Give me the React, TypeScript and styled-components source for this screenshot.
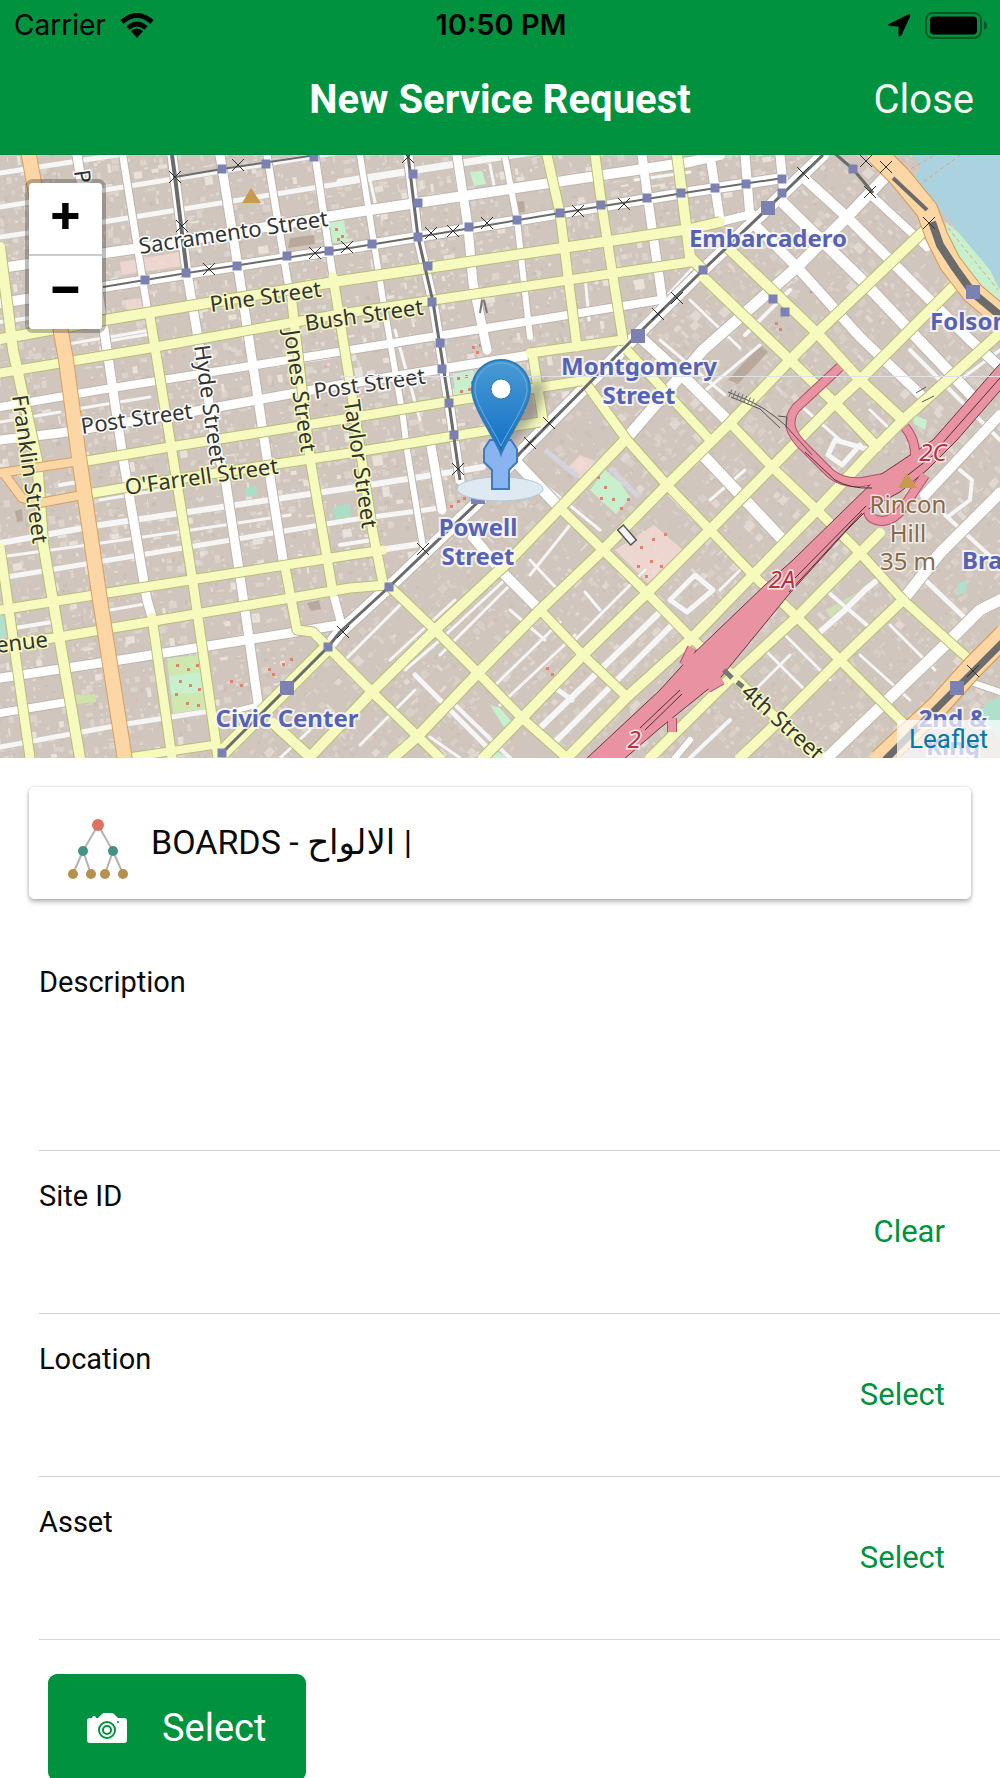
import React from "react";
import styled, { createGlobalStyle } from "styled-components";

const green = "#00923f";

const GlobalStyle = createGlobalStyle`
  *, *::before, *::after { box-sizing: border-box; }
  body { margin: 0; background: #fff; color: #0a0a0a; font-family: Roboto, "Noto Sans", "DejaVu Sans", sans-serif; }
  button, input, textarea { font: inherit; color: inherit; }
`;

/* ---------- map data ---------- */

type Road = [string, number];

const minorRoads: Road[] = [
  ["0,173 117,155", 5], ["0,207 340,152", 5], ["0,237 103,222 350,182 500,156", 5],
  ["340,182 545,150", 7], ["0,322 60,314", 4], ["108,341 150,334", 3], ["66,362 160,347", 3],
  ["62,345 145,331", 3], ["75,428 155,415", 3], ["70,410 150,397", 3], ["0,422 60,412", 3],
  ["0,557 80,546 185,531 290,515", 3], ["7,577 110,560 225,541 350,520 440,508", 5],
  ["0,543 100,525 350,488 483,467", 6], ["100,500 160,490", 3], ["60,485 78,482", 4],
  ["110,610 145,604", 3], ["15,628 52,622", 4], ["0,747 120,725 210,711", 5],
  ["160,382 235,371 330,357", 4], ["340,545 372,540", 4], ["380,550 433,542", 6],
  ["440,300 520,287", 3], ["395,330 420,420", 3], ["370,180 378,215", 3],
  ["490,165 496,195", 3], ["455,170 460,200", 3], ["585,275 589,320", 3],
  ["635,180 690,172", 3], ["660,170 700,164", 3], ["690,300 740,348", 3], ["660,340 725,395", 3],
  ["700,260 640,325", 3], ["745,335 790,290", 4], ["700,395 760,345", 3],
  ["405,670 440,640 510,575", 3], ["345,660 400,605", 3], ["390,660 455,600", 3],
  ["530,575 570,525", 3], ["530,560 560,592", 3], ["510,610 545,640", 3],
  ["440,655 515,580", 3], ["490,690 560,622", 3], ["500,705 575,635", 3],
  ["450,700 510,758", 4], ["415,675 490,750", 5], ["360,745 415,690", 3], ["430,737 460,758", 3],
  ["540,728 660,612", 6], ["555,742 672,625", 6], ["558,690 572,700", 5],
  ["575,640 645,570", 3], ["585,592 600,610", 3], ["720,590 745,565", 3],
  ["670,600 695,575 713,590 687,612 670,600", 5], ["820,632 845,610 865,590 875,582", 6],
  ["828,592 868,626", 4], ["785,635 830,680", 3], ["765,650 810,695", 3],
  ["745,700 790,655", 3], ["890,625 935,670", 3], ["860,655 910,700", 3],
  ["870,450 835,440 828,455 842,465 860,445", 5], ["945,515 1000,565", 4],
  ["960,470 972,480 970,500 950,515", 4], ["925,580 965,618", 5], ["670,495 710,535", 3],
  ["800,405 840,440", 3], ["870,410 893,432", 3], ["710,500 745,470", 3],
  ["640,740 690,700", 4], ["690,758 730,720", 4], ["520,465 600,530", 3],
  ["910,350 1000,440", 4], ["960,380 1000,350", 3], ["280,758 310,730", 3],
];

const whiteRoads: Road[] = [
  ["0,268 140,248 350,213 690,162 720,155", 10], ["0,303 103,287 350,248 690,192 783,178", 10],
  ["0,407 100,390 350,350 487,328 660,300", 8], ["0,440 60,433 190,412 340,385 530,355", 9],
  ["0,678 120,660 290,633 350,623", 9], ["0,713 67,702", 8], ["210,717 262,704", 5],
  ["77,155 103,323 123,458 147,600 152,617", 9],
  ["123,157 147,307", 7], ["172,155 187,273 200,350 217,450 225,477 245,610 260,717", 9],
  ["220,155 238,267 267,458 283,560", 9], ["267,155 287,277 292,303", 7],
  ["315,155 333,277", 7], ["333,593 343,630", 8], ["360,155 383,300 403,417 407,450 423,547", 6],
  ["408,155 418,237 433,302 449,403 460,480", 9], ["457,155 468,227 473,283 487,350", 9],
  ["430,440 442,510", 9], ["505,157 517,220 530,337", 6], ["642,155 648,200 662,297", 9],
  ["710,155 720,220", 9], ["745,155 750,217", 9], ["780,155 784,195", 9], ["720,222 752,214", 8],
  ["823,155 768,208 703,270 637,335 520,453 478,502 389,587 340,632 328,647", 12],
  ["890,172 847,217 797,267 703,350 625,440", 11],
  ["873,197 927,247", 8], ["803,177 847,217 893,263 970,340 1000,367", 10],
  ["780,200 860,278 973,397", 11], ["757,227 797,267 860,337 923,397", 10],
  ["640,337 690,383 730,423", 11], ["700,452 780,537", 11],
  ["517,463 560,508", 11], ["473,537 503,573 537,607", 10],
  ["1000,493 940,553 903,600", 11], ["1000,600 980,610 943,647 827,758", 11],
  ["925,495 1000,415", 10], ["675,758 690,740", 6], ["965,680 1000,692", 6],
];

const yellowRoads: Road[] = [
  ["0,339 105,320 340,281 690,229 720,222", 10], ["0,373 150,348 340,314 690,262 693,262", 9],
  ["87,461 170,447 350,418 440,403 587,380", 9], ["93,493 170,480 350,453 540,422", 9],
  ["0,610 107,593 350,555 383,550", 9], ["0,645 53,638 350,588 387,585", 9],
  ["132,757 213,745", 8], ["0,247 13,350 37,460 43,543 80,758", 10],
  ["0,547 10,617 30,758", 9], ["152,617 172,758", 9],
  ["150,317 173,458 193,583 218,758", 9], ["285,567 297,630 313,632 372,692 440,758", 9],
  ["292,303 310,458 333,593", 9], ["333,277 350,383 373,533 383,583", 9],
  ["547,155 560,213 577,347", 9], ["595,155 602,207 623,340", 9],
  ["677,155 682,193 690,257 703,270", 10], ["530,353 623,340", 9], ["533,357 543,420", 9],
  ["328,647 222,753", 14],
  ["625,440 560,508 507,563 435,630 372,692 310,757 273,723", 10],
  ["927,228 817,333 790,360 730,423 667,485 603,550 540,610 478,673 417,737 393,758", 10],
  ["957,283 860,380 835,403 772,467 710,530 647,593 583,655 522,718 483,758", 10],
  ["1000,333 903,420 873,450 817,510 753,575 690,640 627,697 567,758", 10],
  ["880,533 860,553 797,617 732,677 650,758", 10], ["903,600 840,660 777,723 740,758", 10],
  ["727,247 817,333 860,380 903,420", 10], ["703,277 790,360 835,403 877,447", 10],
  ["627,350 710,440", 9], ["730,423 772,467 817,510 860,553 903,600 973,663", 9],
  ["587,385 627,440 667,485 710,530 753,575 797,617 840,660 907,727", 9],
  ["560,508 603,550 647,593 690,637 727,670 817,758", 9],
  ["540,610 583,655 627,697", 9], ["390,587 435,630 478,673 522,718 567,758", 9],
];

const orangeRoads: Road[] = [
  ["28,150 66,360 78,450 100,600 125,760", 14],
  ["0,473 80,461", 8], ["5,475 22,498 40,503 82,495", 8],
];

const coastRoads: Road[] = [
  ["878,155 900,177 927,210 937,237 950,263 973,293 1005,320", 21],
  ["1005,635 973,667 937,707 880,760", 21],
];

const railLines: Road[] = [
  ["103,287 187,273 350,248 418,237 560,213 690,192 783,178", 2],
  ["172,155 175,177 187,273", 4], ["175,177 222,169 316,155", 2],
  ["408,155 418,237 433,302 449,403 460,480", 3],
  ["823,155 768,208 703,270 637,335 520,453 478,502 389,587 340,632 328,647 222,753", 3],
  ["833,152 853,169 873,193", 3], ["893,178 927,210", 4],
  ["932,222 940,245 955,268 973,293 1003,318", 8], ["1005,640 957,688 885,760", 7],
];

const motorway =
  "M1005,358 L933,440 L880,475 L793,560 L765,585 L690,657 L660,690 L585,760 L623,760 L660,728 L717,682 L790,593 L847,530 L867,510 L900,492 L927,470 L957,440 L1005,385 Z";
const ramps = [
  "M840,367 L796,408 Q789,416 791,428 Q794,438 807,450 L830,473 Q843,484 862,482 L895,476",
  "M868,509 Q868,520 882,521 Q896,520 905,505 L925,475",
  "M905,427 Q916,440 915,458",
  "M684,665 L692,648", "M708,688 L722,680", "M672,718 L672,732",
];

const stops: [number, number, number][] = [
  [222, 169, 9], [266, 164, 9], [314, 157, 9], [145, 280, 9], [186, 273, 9], [237, 266, 9], [287, 256, 9],
  [329, 251, 9], [413, 174, 9], [418, 203, 9], [372, 244, 9], [418, 237, 9], [469, 227, 9], [517, 220, 9],
  [560, 213, 9], [601, 205, 9], [647, 198, 9], [681, 193, 9], [428, 266, 9], [432, 302, 9], [440, 343, 9],
  [442, 369, 9], [449, 403, 9], [454, 435, 9], [715, 188, 9], [746, 184, 9], [782, 179, 9], [782, 193, 9],
  [853, 169, 9], [703, 270, 9], [773, 299, 9], [785, 312, 9], [768, 208, 14], [973, 292, 14],
  [638, 336, 14], [287, 688, 14], [328, 647, 9], [222, 753, 9], [389, 587, 9], [478, 497, 14], [957, 688, 14],
];

const crossings: [number, number][] = [
  [175, 177], [182, 226], [238, 165], [209, 269], [315, 253], [347, 247], [431, 233], [453, 231],
  [487, 223], [578, 211], [624, 204], [677, 298], [658, 314], [549, 423], [530, 443], [408, 157],
  [803, 173], [870, 192], [866, 161], [886, 167], [929, 223], [458, 469], [423, 549], [343, 632], [973, 671],
];

type StreetLabel = [text: string, x: number, y: number, angle: number, onYellow?: boolean];
const streetLabels: StreetLabel[] = [
  ["Sacramento Street", 140, 254, -8.5],
  ["Pine Street", 211, 312, -8, true],
  ["Bush Street", 306, 331, -8, true],
  ["Post Street", 315, 399, -8],
  ["Post Street", 82, 434, -8],
  ["O'Farrell Street", 126, 495, -8, true],
  ["Hyde Street", 194, 346, 82],
  ["Jones Street", 284, 331, 82, true],
  ["Taylor Street", 344, 401, 82, true],
  ["Franklin Street", 12, 396, 82, true],
  ["P", 74, 171, 82],
  ["enue", -3, 653, -7, true],
  ["4th Street", 740, 694, 42, true],
];

const placeLabels: [string, number, number, string?][] = [
  ["Embarcadero", 768, 247], ["Montgomery", 639, 375], ["Street", 639, 404],
  ["Powell", 478, 536], ["Street", 478, 565], ["Civic Center", 287, 727],
  ["Folsom", 930, 330, "start"], ["Brannan", 962, 569, "start"], ["2nd &", 953, 727], ["King", 953, 755],
];

/* Deterministic building footprints, laid along each street grid. */
function footprints(seed: number, w: number, h: number, chance: number, max: number) {
  let s = seed;
  const rnd = () => {
    s = (s * 1664525 + 1013904223) % 4294967296;
    return s / 4294967296;
  };
  let d = "";
  for (let y = 0; y < h; y += 9) {
    for (let x = 0; x < w; x += 10) {
      if (rnd() > chance) continue;
      const bw = Math.round(1 + rnd() * max);
      const bh = Math.round(1 + rnd() * max);
      d += `M${Math.round(x + rnd() * 8)},${Math.round(y + rnd() * 7)}h${bw}v${bh}h${-bw}z`;
    }
  }
  return d;
}
const lightLots = footprints(11, 1500, 1500, 0.4, 7);
const paleLots = footprints(29, 1500, 1500, 0.1, 9);
const thinLots = footprints(53, 1500, 1500, 0.4, 3);
const shadeLots = footprints(71, 1500, 1500, 0.25, 4);
const redDots = footprints(97, 1500, 1500, 0.012, 2);

const RoadSet = ({ roads, fill, casing, edge = 3 }: { roads: Road[]; fill: string; casing: string; edge?: number }) => (
  <g fill="none" strokeLinejoin="round">
    {roads.map(([p, w], i) => <polyline key={"c" + i} points={p} stroke={casing} strokeWidth={w + edge} />)}
    {roads.map(([p, w], i) => <polyline key={"f" + i} points={p} stroke={fill} strokeWidth={w} strokeLinecap="round" />)}
  </g>
);

const Lots = () => (
  <>
    <path d={shadeLots} fill="#cabfb6" />
    <path d={lightLots} fill="#dcd4cc" />
    <path d={paleLots} fill="#e9e2da" />
    <path d={thinLots} fill="#dfdad5" />
    <path d={redDots} fill="#f3a79d" />
  </>
);

const CityMap = () => (
  <MapDrawing viewBox="0 155 1000 603" preserveAspectRatio="xMidYMid slice" role="img" aria-label="Street map of San Francisco">
    <defs>
      <clipPath id="north"><path d="M0,155H823L222,758H0Z" /></clipPath>
      <clipPath id="south"><path d="M823,155H1000V758H222Z" /></clipPath>
      <linearGradient id="pin" x1="0" y1="0" x2="0" y2="1">
        <stop offset="0" stopColor="#4a9bd4" /><stop offset="1" stopColor="#126fc6" />
      </linearGradient>
      <filter id="soft"><feGaussianBlur stdDeviation="5" /></filter>
    </defs>
    <rect x="0" y="150" width="1000" height="620" fill="#d1c6bd" />
    <g clipPath="url(#north)"><g transform="rotate(-9) translate(-130 130)"><Lots /></g></g>
    <g clipPath="url(#south)"><g transform="rotate(-45) translate(-500 200)" opacity="0.7"><Lots /></g></g>

    <g fill="#f4d9d3" opacity="0.8">
      <path d="M120,262L180,252L183,266L122,275ZM125,300L145,298L148,310L127,312ZM654,525L683,550L648,583L615,550ZM580,455L598,462L582,480L565,470Z" />
    </g>
    <g fill="#c8f0cd">
      <path d="M167,658L200,655L207,710L173,714Z" fill="#cfe8b0" />
      <path d="M169,676L202,672L204,692L171,695Z" />
      <path d="M453,374L473,370L476,391L455,396ZM605,470L620,482L630,498L616,514L590,490ZM470,172L482,171L486,184L474,186ZM329,222L344,219L347,242L332,243Z" />
      <path d="M245,488L256,486L257,496L246,497ZM333,508L350,503L351,516L335,520Z" fill="#aadfc5" />
      <path d="M0,615L4,616L6,638L0,638ZM957,584L967,580L966,592L958,595ZM985,705L1000,695V740L975,715Z" fill="#aee0cb" />
      <path d="M490,705L500,708L512,722L504,727ZM497,752L510,758H490Z" />
      <path d="M913,415L927,420L925,430L914,424Z" />
      <path d="M75,695L95,694L96,702L77,704Z" fill="#cfe2a9" />
    </g>
    <g fill="#e8806f">
      {[[176, 664], [187, 668], [196, 664], [179, 680], [189, 684], [198, 688], [175, 693], [186, 702], [197, 704], [457, 377], [465, 375], [471, 381], [460, 390], [468, 388], [597, 476], [604, 486], [612, 498], [620, 507], [600, 497], [627, 498], [640, 546], [652, 538], [664, 533], [650, 560], [637, 565], [645, 575], [660, 565], [335, 228], [341, 235], [337, 238], [450, 505], [457, 500], [463, 497], [472, 346], [476, 351], [479, 344], [775, 322], [779, 328], [770, 337], [766, 342], [810, 290], [817, 296], [268, 668], [282, 663], [272, 673], [290, 658], [230, 680], [240, 684], [546, 667], [551, 673]].map(([x, y], i) => (
        <rect key={i} x={x} y={y} width="3" height="3" />
      ))}
    </g>
    <g fill="#b9a99d">
      <path d="M290,238L314,235L315,244L288,248ZM515,202L524,201L525,212L518,213ZM728,380L760,345L768,352L738,384ZM15,511L22,509L23,521L17,522ZM307,603L319,600L321,609L311,611Z" />
    </g>
    <path d="M826,610L862,590L866,594L834,625Z" fill="#cfe0b4" />

    <path d="M908,150H1000V300L985,265L943,213L913,182L920,165Z" fill="#aad3df" />
    <path d="M945,222L958,232L990,270L1000,290V312L975,288L952,255Z" fill="#c8f0cd" />
    <g fill="none" stroke="#e79b90" strokeWidth="1" strokeDasharray="4 3">
      <path d="M918,186L960,155M905,172L935,155M948,228L998,290" />
    </g>

    <RoadSet roads={minorRoads} fill="#f6f6f6" casing="#cdc5bf" edge={1} />
    <RoadSet roads={whiteRoads} fill="#fefefe" casing="#bdb5ae" edge={2} />
    <RoadSet roads={yellowRoads} fill="#f6fabf" casing="#b9bd79" edge={2} />
    <RoadSet roads={orangeRoads} fill="#fcd6a4" casing="#d5a161" edge={2} />
    <RoadSet roads={coastRoads} fill="#fcd6a4" casing="#d2994e" edge={2} />

    <g fill="none" strokeLinejoin="round">
      {ramps.map((d) => <path key={d} d={d} stroke="#b5506c" strokeWidth="10" />)}
      <path d={motorway} fill="#e892a2" stroke="#6b3442" strokeWidth="1" />
      {ramps.map((d) => <path key={d} d={d} stroke="#e892a2" strokeWidth="8" />)}
      <path d="M789,592L862,513M795,578L866,506M640,728L680,690M645,730L682,694M1000,378L940,446M904,478L940,450M805,452L835,480Q850,489 872,488" stroke="#4e3038" strokeWidth="1" />
      <path d="M728,392L745,399Q765,407 785,425L812,455M731,397L760,409L780,428M778,416L787,417L786,428M916,393L926,387M922,402L934,396" stroke="#555" strokeWidth="1" />
      <path d="M730,393L756,404" stroke="#777" strokeWidth="8" strokeDasharray="1 3" />
      <path d="M620,527L634,543" stroke="#555" strokeWidth="9" /><path d="M621,528L633,542" stroke="#f4f4f4" strokeWidth="6" />
      <path d="M610,468L637,496M545,450L578,477" stroke="#d3d2dd" strokeWidth="5" />
      {railLines.map(([p, w], i) => <polyline key={i} points={p} stroke="#6b6b6b" strokeWidth={w} />)}
      <path d="M482,300L480,313M484,300L487,313" stroke="#777" strokeWidth="2" />
    </g>
    <g stroke="#333" strokeWidth="1" fill="none">
      {crossings.map(([x, y], i) => <path key={i} d={`M${x - 6},${y - 6}l12,12m0,-12l-12,12`} />)}
    </g>
    <g fill="#7c81b4">
      {stops.map(([x, y, s], i) => <rect key={i} x={x - s / 2} y={y - s / 2} width={s} height={s} />)}
    </g>
    <path d="M251,188L261,203H242Z" fill="#c99a4d" />
    <path d="M907,473L917,488H898Z" fill="#c99a4d" />
    <path d="M724,670l8,8m5,4l6,5" stroke="#777" strokeWidth="5" />

    {streetLabels.map(([t, x, y, a, yellow], i) => (
      <StreetName key={i} $halo={yellow ? "#f6fabf" : "#ffffff"} transform={`translate(${x} ${y}) rotate(${a})`}>{t}</StreetName>
    ))}
    {placeLabels.map(([t, x, y, anchor], i) => (
      <PlaceName key={i} x={x} y={y} textAnchor={(anchor ?? "middle") as "start" | "middle"}>{t}</PlaceName>
    ))}
    <HillName x="908" y="513">Rincon</HillName>
    <HillName x="908" y="542">Hill</HillName>
    <HillName x="908" y="570">35 m</HillName>
    <ExitName x="933" y="461">2C</ExitName>
    <ExitName x="782" y="588">2A</ExitName>
    <ExitName x="634" y="748">2</ExitName>
    <path d="M340,376.5H1000" stroke="#dde3ea" strokeWidth="1" />

    <path d="M503,452L535,418Q552,385 540,378Q522,380 505,440Z" fill="#333" opacity="0.35" filter="url(#soft)" />
    <ellipse cx="500" cy="489" rx="43" ry="12" fill="#dfe9f1" stroke="#a9c8e0" />
    <path d="M490,440H511L517,449V462L509,470V489H492V470L484,462V449Z" fill="#8ab4ef" stroke="#3f7cbd" strokeWidth="2" />
    <path d="M501,454C497,441 472,408 472,389A29,29 0 0 1 530,389C530,408 505,441 501,454Z" fill="url(#pin)" stroke="#2f7ab5" strokeWidth="2" />
    <path d="M501,446C494,430 475,405 475,389A26,26 0 0 1 527,389C527,405 508,430 501,446Z" fill="none" stroke="#6db0dd" strokeWidth="1" />
    <circle cx="501" cy="389" r="10" fill="#fff" stroke="#2f79b6" />
  </MapDrawing>
);

/* ---------- styled parts ---------- */

const Screen = styled.main`
  display: flex;
  flex-direction: column;
  height: 100vh;
  overflow: hidden;
`;

const TopBar = styled.header`
  flex: none;
  background: ${green};
  border-bottom: 1px solid #0b7f3c;
`;

const Columns = styled.div`
  display: grid;
  grid-template-columns: 1fr auto 1fr;
  align-items: center;
`;

const StatusBar = styled(Columns)`
  height: 50px;
  padding: 0 12px 0 14px;
  color: #000;
  font-family: Inter, Roboto, sans-serif;
  font-size: 28px;
  line-height: 32px;
`;

const Cluster = styled.div<{ $end?: boolean }>`
  display: flex;
  align-items: center;
  gap: 14px;
  justify-content: ${(p) => (p.$end ? "flex-end" : "flex-start")};
`;

const Clock = styled.time`
  font-size: 29px;
  font-weight: 600;
`;

const NavBar = styled(Columns)`
  height: 104px;
  padding: 0 26px 4px;
  color: #fff;
`;

const Title = styled.h1`
  grid-column: 2;
  margin: 0;
  font-size: 40px;
  font-weight: 700;
  line-height: 48px;
`;

const CloseButton = styled.button`
  justify-self: end;
  padding: 0;
  border: 0;
  background: none;
  color: #f4f4f4;
  font-size: 40px;
  line-height: 48px;
`;

const Body = styled.div`
  flex: 1;
  min-height: 0;
  overflow: hidden;
`;

const MapPane = styled.section`
  position: relative;
  height: 603px;
  overflow: hidden;
  background: #d1c6bd;
`;

const MapDrawing = styled.svg`
  display: block;
  width: 100%;
  height: 100%;
`;

const StreetName = styled.text<{ $halo: string }>`
  font-family: "Noto Sans", sans-serif;
  font-size: 22px;
  fill: #333;
  stroke: ${(p) => p.$halo};
  stroke-width: 3px;
  paint-order: stroke;
`;

const PlaceName = styled.text`
  font-family: "Noto Sans", sans-serif;
  font-size: 24px;
  font-weight: 700;
  fill: #5562b6;
  stroke: rgba(255, 255, 255, 0.75);
  stroke-width: 4px;
  paint-order: stroke;
`;

const HillName = styled.text`
  font-family: "Noto Sans", sans-serif;
  font-size: 24px;
  fill: #8b6846;
  stroke: rgba(255, 255, 255, 0.7);
  stroke-width: 3px;
  paint-order: stroke;
  text-anchor: middle;
`;

const ExitName = styled(HillName)`
  font-style: italic;
  fill: #b9303f;
  stroke: #fbe9ea;
`;

const ZoomControl = styled.div`
  position: absolute;
  top: 24px;
  left: 25px;
  display: flex;
  flex-direction: column;
  border: 4px solid rgba(0, 0, 0, 0.25);
  border-radius: 8px;
  background-clip: padding-box;
`;

const ZoomButton = styled.button`
  width: 73px;
  height: 73px;
  padding: 0 0 12px;
  border: 0;
  background: #fff;
  color: #000;
  font-family: Inter, sans-serif;
  font-size: 52px;
  font-weight: 700;
  line-height: 60px;
  &:first-child { border-bottom: 2px solid #ccc; border-radius: 4px 4px 0 0; }
  &:last-child { border-radius: 0 0 4px 4px; }
`;

const Attribution = styled.div`
  position: absolute;
  right: 0;
  bottom: 0;
  padding: 0 12px;
  background: rgba(255, 255, 255, 0.7);
  font-size: 26px;
  line-height: 38px;
  a { color: #0078a8; text-decoration: none; }
`;

const Card = styled.section`
  display: flex;
  align-items: center;
  gap: 22px;
  height: 112px;
  margin: 29px 29px 38px;
  padding: 0 38px;
  border-radius: 5px;
  background: #fff;
  box-shadow: 0 3px 5px rgba(0, 0, 0, 0.28), 0 0 3px rgba(0, 0, 0, 0.16);
  font-size: 34px;
  line-height: 40px;
`;

const TreeIcon = styled.svg`
  flex: none;
  margin-top: 12px;
`;

const CardTitle = styled.span`
  padding-bottom: 2px;
`;

const Form = styled.form`
  padding-left: 39px;
`;

const Field = styled.div<{ $tall?: boolean }>`
  display: flex;
  align-items: center;
  height: ${(p) => (p.$tall ? 214 : 163)}px;
  padding-right: 55px;
  border-bottom: 1px solid #d4d4d4;
`;

const FieldMain = styled.div`
  display: flex;
  flex: 1;
  flex-direction: column;
  align-self: stretch;
  padding: 28px 0 12px;
  font-size: 29px;
  line-height: 34px;
`;

const fieldText = `
  flex: 1;
  min-height: 0;
  padding: 0;
  border: 0;
  outline: 0;
  background: transparent;
  resize: none;
`;
const TextInput = styled.input`${fieldText}`;
const TextArea = styled.textarea`${fieldText}`;

const FieldAction = styled.button`
  padding: 0;
  border: 0;
  background: none;
  color: ${green};
  font-size: 31px;
  line-height: 36px;
`;

const PhotoButton = styled.button`
  display: flex;
  align-items: center;
  gap: 35px;
  height: 107px;
  margin: 34px 0 0 9px;
  padding: 0 40px 0 39px;
  border: 0;
  border-radius: 9px;
  background: ${green};
  color: #fff;
  font-size: 38px;
  line-height: 44px;
`;

const Row = ({ id, label, action }: { id: string; label: string; action: string }) => (
  <Field>
    <FieldMain>
      <label htmlFor={id}>{label}</label>
      <TextInput id={id} type="text" />
    </FieldMain>
    <FieldAction type="button">{action}</FieldAction>
  </Field>
);

export default function App() {
  return (
    <Screen>
      <GlobalStyle />
      <TopBar>
        <StatusBar>
          <Cluster>
            <span>Carrier</span>
            <svg width="34" height="25" viewBox="0 0 34 25" fill="none" stroke="#000" strokeWidth="5">
              <path d="M2 9Q17 -4 32 9" />
              <path d="M8 15Q17 7 26 15" />
              <path d="M17 25L11 18Q17 13 23 18Z" fill="#000" stroke="none" />
            </svg>
          </Cluster>
          <Clock>10:50 PM</Clock>
          <Cluster $end>
            <svg width="23" height="23" viewBox="0 0 23 23">
              <path d="M1 10L20 0.5Q23 -0.5 22 3L13.5 21Q11 24 10.500 21L10.500 12.500L2 12Q-1 11.500 1 10Z" />
            </svg>
            <svg width="63" height="27" viewBox="0 0 63 27">
              <rect x="1" y="1" width="55" height="25" rx="7" fill="none" stroke="#045925" strokeWidth="2" />
              <rect x="5" y="4.500" width="47" height="18" rx="4" />
              <path d="M59 9Q62 10 62 13.500Q62 17 59 18Z" fill="#045925" />
            </svg>
          </Cluster>
        </StatusBar>
        <NavBar>
          <Title>New Service Request</Title>
          <CloseButton type="button">Close</CloseButton>
        </NavBar>
      </TopBar>
      <Body>
        <MapPane>
          <CityMap />
          <ZoomControl>
            <ZoomButton type="button" aria-label="Zoom in">+</ZoomButton>
            <ZoomButton type="button" aria-label="Zoom out">−</ZoomButton>
          </ZoomControl>
          <Attribution><a href="#leaflet">Leaflet</a></Attribution>
        </MapPane>
        <Card>
          <TreeIcon width="62" height="62" viewBox="0 0 62 62">
            <path d="M31 7L16 33L6 56M16 33L24 56M31 7L46 33L38 56M46 33L56 56" fill="none" stroke="#b3b3b3" strokeWidth="2" />
            <circle cx="31" cy="7" r="6" fill="#de7260" />
            <circle cx="16" cy="33" r="5" fill="#469185" />
            <circle cx="46" cy="33" r="5" fill="#469185" />
            {[6, 24, 38, 56].map((x) => <circle key={x} cx={x} cy="56" r="5" fill="#b4914e" />)}
          </TreeIcon>
          <CardTitle>BOARDS - الالواح |</CardTitle>
        </Card>
        <Form>
          <Field $tall>
            <FieldMain>
              <label htmlFor="description">Description</label>
              <TextArea id="description" />
            </FieldMain>
          </Field>
          <Row id="site" label="Site ID" action="Clear" />
          <Row id="location" label="Location" action="Select" />
          <Row id="asset" label="Asset" action="Select" />
          <PhotoButton type="button">
            <svg width="40" height="30" viewBox="0 0 40 30">
              <path fill="#fff" d="M3 5H5Q5 3 7 3Q9 3 9 5H11L15 1Q16 0 18 0H24Q26 0 27 1L31 5H37Q40 5 40 8V27Q40 30 37 30H3Q0 30 0 27V8Q0 5 3 5Z" />
              <circle cx="20" cy="17" r="8" fill="none" stroke={green} strokeWidth="2" />
              <circle cx="20" cy="17" r="4" fill="none" stroke={green} strokeWidth="2" />
              <circle cx="31" cy="9" r="1" fill={green} />
            </svg>
            Select
          </PhotoButton>
        </Form>
      </Body>
    </Screen>
  );
}
